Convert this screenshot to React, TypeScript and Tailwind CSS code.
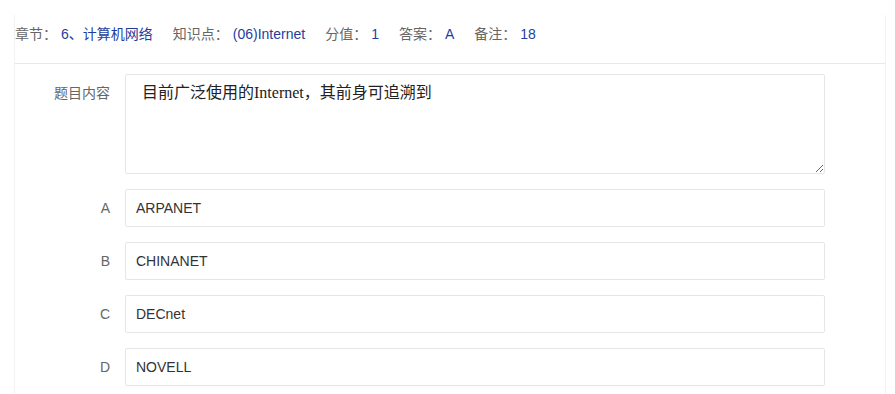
const meta = [
  { label: '章节：', value: '6、计算机网络' },
  { label: '知识点：', value: '(06)Internet' },
  { label: '分值：', value: '1' },
  { label: '答案：', value: 'A' },
  { label: '备注：', value: '18' },
]

const options = [
  { key: 'A', text: 'ARPANET' },
  { key: 'B', text: 'CHINANET' },
  { key: 'C', text: 'DECnet' },
  { key: 'D', text: 'NOVELL' },
]

export default function App() {
  return (
    <div className="w-[895px] h-[394px] overflow-hidden bg-white pt-[15px] pl-[14px] font-['Liberation_Sans','Noto_Sans_CJK_SC',sans-serif]">
      <div className="w-[872px] h-[400px] border-l border-r border-[#f2f2f2]">
        {/* question meta */}
        <div className="h-[49px] border-b border-[#e8e8e8] flex items-start pt-[9px] text-[14px] leading-[20px]">
          {meta.map((m) => (
            <div key={m.label} className="flex mr-[20px]">
              <span className="text-[#666]">{m.label}</span>
              <span className="ml-[4px] text-[#1f3d9e]">{m.value}</span>
            </div>
          ))}
        </div>

        <div className="pt-[10px]">
          <div className="flex mb-[15px]">
            <label className="w-[110px] shrink-0 px-[15px] py-[9px] leading-[20px] text-right text-[14px] text-[#666]">题目内容</label>
            <textarea
              readOnly
              value="目前广泛使用的Internet，其前身可追溯到"
              className="w-[700px] h-[100px] border border-[#e6e6e6] rounded-[2px] pl-[16px] pr-[10px] pt-[6px] text-[16px] leading-[24px] text-[#222] outline-none font-['Liberation_Serif','Noto_Sans_CJK_SC',serif]"
            />
          </div>

          {options.map((o) => (
            <div key={o.key} className="flex mb-[15px]">
              <label className="w-[110px] shrink-0 px-[15px] py-[9px] leading-[20px] text-right text-[14px] text-[#666]">{o.key}</label>
              <input
                readOnly
                value={o.text}
                className="w-[700px] h-[38px] border border-[#e6e6e6] rounded-[2px] pl-[10px] text-[14px] text-[#333] outline-none"
              />
            </div>
          ))}
        </div>
      </div>
    </div>
  )
}
